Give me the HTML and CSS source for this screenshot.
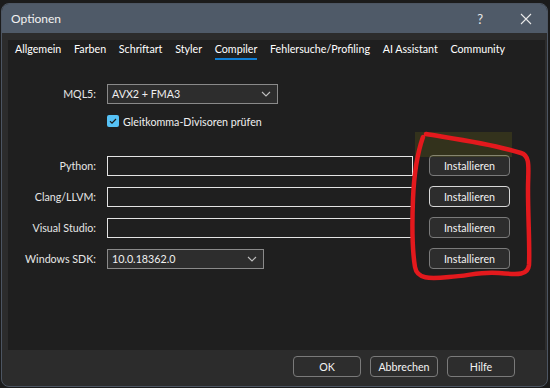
FILE: index.html
```html
<!DOCTYPE html>
<html lang="de">
  <head>
    <meta charset="UTF-8" />
    <title>Optionen</title>
    <link rel="stylesheet" href="styles.css">
  </head>
  <body>
    <div class="window">
      <div class="titlebar">
        <span class="title">Optionen</span>
        <span class="help">?</span>
        <svg class="close" width="12" height="12" viewBox="0 0 12 12">
          <path d="M1 1 L11 11 M11 1 L1 11" stroke="#e8e8e8" stroke-width="1.1" fill="none"/>
        </svg>
      </div>

      <div class="body">
        <div class="panel">
          <div class="tabs">
            <span class="tab">Allgemein</span>
            <span class="tab">Farben</span>
            <span class="tab">Schriftart</span>
            <span class="tab">Styler</span>
            <span class="tab active">Compiler</span>
            <span class="tab">Fehlersuche/Profiling</span>
            <span class="tab">AI Assistant</span>
            <span class="tab">Community</span>
          </div>

          <div class="content">
            <div class="row">
              <label>MQL5:</label>
              <div class="select mql">
                <span>AVX2 + FMA3</span>
                <svg width="10" height="6" viewBox="0 0 10 6"><path d="M1 1 L5 5 L9 1" stroke="#bdbdbd" stroke-width="1.1" fill="none"/></svg>
              </div>
            </div>

            <div class="check-row">
              <span class="checkbox">
                <svg width="12" height="12" viewBox="0 0 12 12"><path d="M3 6.3 L5 8.2 L9 4" stroke="#1b1b1b" stroke-width="1.2" fill="none"/></svg>
              </span>
              <span>Gleitkomma-Divisoren prüfen</span>
            </div>

            <div class="tools">
              <div class="row">
                <label>Python:</label>
                <div class="input"></div>
                <button class="install">Installieren</button>
              </div>
              <div class="row">
                <label>Clang/LLVM:</label>
                <div class="input"></div>
                <button class="install focus">Installieren</button>
              </div>
              <div class="row">
                <label>Visual Studio:</label>
                <div class="input"></div>
                <button class="install">Installieren</button>
              </div>
              <div class="row">
                <label>Windows SDK:</label>
                <div class="select sdk">
                  <span>10.0.18362.0</span>
                  <svg width="10" height="6" viewBox="0 0 10 6"><path d="M1 1 L5 5 L9 1" stroke="#bdbdbd" stroke-width="1.1" fill="none"/></svg>
                </div>
                <button class="install sdk-btn">Installieren</button>
              </div>
            </div>
          </div>

          <!-- Markierung über den Knöpfen -->
          <div class="highlight"></div>
          <svg class="scribble" width="140" height="160" viewBox="0 0 140 160">
            <path d="M17 5 C40 9 80 14 112 24 C122 27 119 40 119 60 C119 90 121 120 120 136 C119 146 110 146 90 144 C72 142 60 147 40 148 C20 150 8 150 6 138 C3 120 3 95 4 70 C5 45 8 25 14 8"
                  stroke="#e3191d" stroke-width="4.5" fill="none" stroke-linecap="round" stroke-linejoin="round"/>
          </svg>
        </div>

        <div class="footer">
          <button class="btn">OK</button>
          <button class="btn">Abbrechen</button>
          <button class="btn">Hilfe</button>
        </div>
      </div>
    </div>
  </body>
</html>
```

FILE: styles.css
```css
body {
  margin: 0;
  background-color: #1b1b1b;
  font-family: Lato, sans-serif;
  font-size: 10.7px;
  color: #f0f0f0;
  overflow: hidden;
}

.window {
  margin: 3px 0 0 1px;
  width: 547px;
  height: 384px;
  border: 1px solid #4c5562;
  border-radius: 8px;
  overflow: hidden;
  box-sizing: border-box;
  display: flex;
  flex-direction: column;
  background-color: #2c2c2c;
}

.titlebar {
  height: 29px;
  flex-shrink: 0;
  background-color: #4f5a68;
  display: flex;
  align-items: center;
  padding: 0 0 0 9px;
}

.title {
  font-size: 12px;
  color: #f2f2f2;
  flex: 1;
}

.help {
  font-size: 13px;
  color: #e8e8e8;
  margin-right: 37px;
}

.close {
  margin-right: 15px;
}

.body {
  flex: 1;
  display: flex;
  flex-direction: column;
  padding: 7px 2px 0 6px;
}

.panel {
  position: relative;
  height: 310px;
  background-color: #1f1f1f;
}

.tabs {
  display: flex;
  gap: 12.7px;
  padding: 0 0 0 7px;
  height: 20px;
}

.tab {
  color: #ffffff;
  line-height: 18px;
  white-space: nowrap;
  border-bottom: 2px solid transparent;
}

.tab.active {
  border-bottom-color: #0f7fd6;
}

.content {
  padding-top: 23px;
}

.row {
  display: flex;
  align-items: center;
  height: 21px;
}

.row label {
  width: 88px;
  margin-right: 11px;
  text-align: right;
  color: #e6e6e6;
  white-space: nowrap;
}

.select {
  height: 20px;
  box-sizing: border-box;
  border: 1px solid #8a8a8a;
  background-color: #2d2d2d;
  display: flex;
  align-items: center;
  justify-content: space-between;
  padding: 0 6px 0 4px;
}

.select.mql {
  width: 171px;
}

.select.sdk {
  width: 157px;
}

.check-row {
  display: flex;
  align-items: center;
  gap: 4px;
  margin: 11px 0 0 99px;
  height: 12px;
}

.checkbox {
  width: 12px;
  height: 12px;
  border-radius: 2px;
  background-color: #56c2f6;
  display: flex;
}

.tools {
  display: flex;
  flex-direction: column;
  gap: 10px;
  margin-top: 28px;
}

.input {
  width: 306px;
  height: 20px;
  box-sizing: border-box;
  border: 1px solid #e4e4e4;
  background-color: #1f1f1f;
}

.install {
  margin-left: 16px;
}

.sdk-btn {
  margin-left: 165px;
}

.install,
.btn {
  width: 81px;
  height: 21px;
  box-sizing: border-box;
  border: 1px solid #7a7a7a;
  border-radius: 4px;
  background-color: #2d2d2d;
  color: #f2f2f2;
  font-family: Lato, sans-serif;
  font-size: 10.7px;
  padding: 0;
}

.install.focus {
  border-color: #d8d8d8;
}

.footer {
  display: flex;
  justify-content: flex-end;
  gap: 9px;
  padding: 6px 30px 0 0;
}

.btn {
  width: 68px;
}

.highlight {
  position: absolute;
  left: 407px;
  top: 92px;
  width: 97px;
  height: 25px;
  background-color: rgba(255, 240, 0, 0.09);
}

.scribble {
  position: absolute;
  left: 401px;
  top: 89px;
}
```
